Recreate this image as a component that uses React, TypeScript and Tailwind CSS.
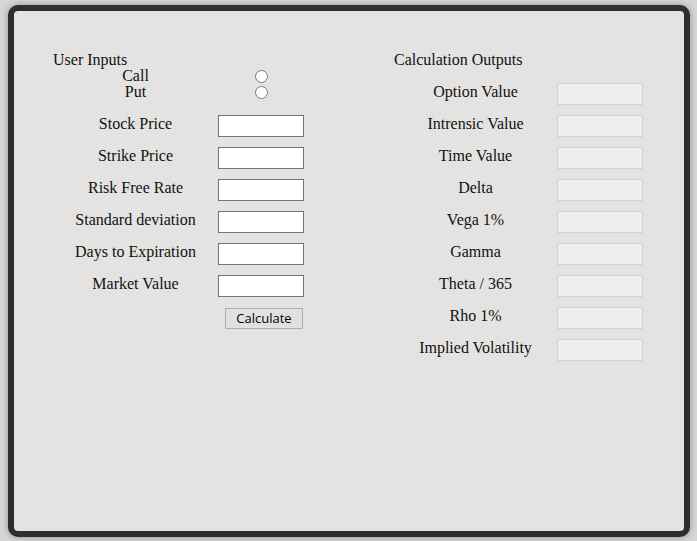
import { useState } from 'react';

const inputRows = ['Stock Price', 'Strike Price', 'Risk Free Rate', 'Standard deviation', 'Days to Expiration', 'Market Value'];
const outputRows = ['Option Value', 'Intrensic Value', 'Time Value', 'Delta', 'Vega 1%', 'Gamma', 'Theta / 365', 'Rho 1%', 'Implied Volatility'];

export default function App() {
  const [type, setType] = useState('');

  return (
    <div className="w-[697px] h-[541px] bg-[#d6d6d6] pl-2 pt-[5px] font-['Liberation_Serif',serif] text-[16px] text-[#111]">
      <div className="w-[682px] h-[532px] rounded-[10px] border-[6px] border-[#2e2e2e] bg-[#e4e3e1] shadow-[0_0_6px_rgba(0,0,0,0.35)] pl-[39px] pt-10 flex gap-[89px]">
        <div className="w-[252px] shrink-0 flex flex-col">
          <div className="h-[18px] leading-[18px]">User Inputs</div>
          {['Call', 'Put'].map((t) => (
            <div key={t} className="flex h-4 items-center -mt-[1px] mb-[1px]">
              <span className="w-[165px] shrink-0 text-center leading-4">{t}</span>
              <span className="w-[86px] flex justify-center">
                <input
                  type="radio"
                  name="type"
                  checked={type === t}
                  onChange={() => setType(t)}
                  className="m-0 w-[13px] h-[13px]"
                />
              </span>
            </div>
          ))}
          <div className="mt-[9px]">
            {inputRows.map((l) => (
              <div key={l} className="flex h-8 items-center">
                <span className="w-[165px] shrink-0 text-center pb-1">{l}</span>
                <input type="text" className="w-[86px] shrink-0 h-[22px] bg-white border border-[#767676] px-1 text-[13px] outline-none" />
              </div>
            ))}
          </div>
          <button className="mt-[6px] ml-[172px] w-[78px] h-[21px] bg-[#e1e1e1] border border-[#adadad] font-['Open_Sans','Liberation_Sans',sans-serif] text-[13px] leading-none text-black">
            Calculate
          </button>
        </div>
        <div className="w-[250px] shrink-0 flex flex-col">
          <div className="h-[18px] leading-[18px]">Calculation Outputs</div>
          <div className="mt-[9px]">
            {outputRows.map((l) => (
              <div key={l} className="flex h-8 items-center">
                <span className="w-[163px] shrink-0 text-center pb-1">{l}</span>
                <input type="text" disabled className="w-[86px] shrink-0 h-[22px] bg-[#efefef] border border-[#d2d2d2]" />
              </div>
            ))}
          </div>
        </div>
      </div>
    </div>
  );
}
